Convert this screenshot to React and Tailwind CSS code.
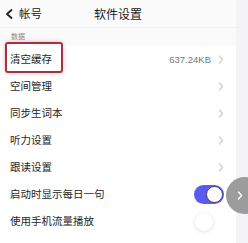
import * as React from "react";

const rows = [
    { name: "清空缓存", value: "637.24KB", type: "link", boxed: true },
    { name: "空间管理", type: "link" },
    { name: "同步生词本", type: "link" },
    { name: "听力设置", type: "link" },
    { name: "跟读设置", type: "link" },
    { name: "启动时显示每日一句", type: "on" },
    { name: "使用手机流量播放", type: "off" },
];

function Chevron({ className }) {
    return (
        <svg width="6" height="9" viewBox="0 0 6 9" className={className}>
            <path d="M1.5 1l3 3.5-3 3.5" fill="none" stroke="currentColor" strokeWidth="1.3" strokeLinecap="round" strokeLinejoin="round" />
        </svg>
    );
}

export default function App() {
    return (
        <div
            className="relative flex w-[248px] h-[243px] overflow-hidden bg-white"
            style={{ fontFamily: '"Noto Sans CJK SC", "Noto Sans", sans-serif' }}
        >
            <div className="w-[236px] flex flex-col bg-white">
                {/* Header */}
                <div className="h-[28px] grid grid-cols-[1fr_auto_1fr] items-center bg-[#fbfbfb] border-b border-[#f1f1f1]">
                    <div className="flex items-center pl-[5px] gap-[6px] text-[#222]">
                        <svg width="8" height="10" viewBox="0 0 8 10">
                            <path d="M6.5 1L2 5l4.5 4" fill="none" stroke="#222" strokeWidth="1.8" strokeLinecap="round" strokeLinejoin="round" />
                        </svg>
                        <span className="text-[11.5px] leading-none">帐号</span>
                    </div>
                    <span className="text-[12px] leading-none text-[#222]">软件设置</span>
                    <div />
                </div>

                {/* Section label */}
                <div className="h-[18px] bg-[#fafafa] pl-[11px] pt-[4px]">
                    <span className="block text-[7px] leading-[8px] text-[#888]">数据</span>
                </div>

                {/* Rows */}
                {rows.map((row, index) => (
                    <div key={index} className="relative h-[27px] flex items-center pl-[10px] pr-[12px]">
                        {row.boxed && (
                            <div className="absolute left-[5px] -top-[4px] w-[58px] h-[31px] border-2 border-[#9e3444] rounded-[3px] shadow-[0_0_4px_rgba(220,80,90,0.45)]" />
                        )}
                        <span className="flex-1 text-[10.5px] leading-none text-[#1e1e1e]">{row.name}</span>
                        {row.value && (
                            <span className="mr-[7px] text-[9.5px] leading-none text-[#777]" style={{ fontFamily: '"Liberation Sans", sans-serif' }}>
                                {row.value}
                            </span>
                        )}
                        {row.type === "link" && <Chevron className="text-[#cfcfcf]" />}
                        {row.type === "on" && (
                            <div className="w-[30px] h-[19px] rounded-full bg-[#5b5bf2] flex items-center justify-end pr-[1px]">
                                <div className="w-[17px] h-[17px] rounded-full bg-white border border-[#444]" />
                            </div>
                        )}
                        {row.type === "off" && (
                            <div className="w-[30px] h-[19px] rounded-full flex items-center pl-[1px]">
                                <div className="w-[18px] h-[18px] rounded-full bg-white shadow-[0_1px_4px_rgba(0,0,0,0.12)]" />
                            </div>
                        )}
                    </div>
                ))}
            </div>
            <div className="flex-1 bg-[#f4f4f6]" />

            {/* Floating collapse button */}
            <div className="absolute left-[226px] top-[177px] w-[37px] h-[37px] rounded-full bg-[#9c9c9c] flex items-center pl-[11px]">
                <Chevron className="text-white" />
            </div>
        </div>
    );
}
